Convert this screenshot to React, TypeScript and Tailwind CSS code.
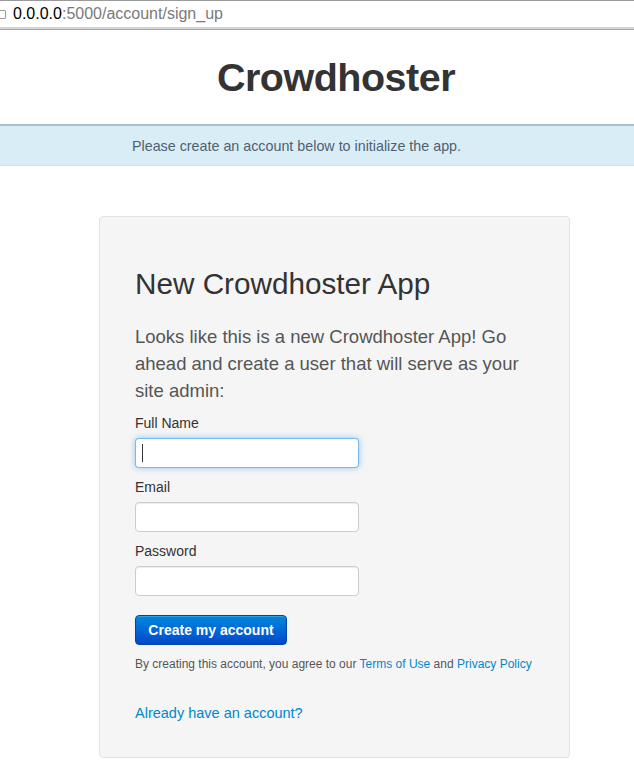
export default function App() {
  return (
    <div className="min-h-screen bg-white font-['Liberation_Sans',Arial,sans-serif] text-[#333]">
      {/* browser address bar */}
      <div className="border-t border-[#9a9a9a]">
        <div className="flex h-[26px] items-center text-[16px] leading-none">
          <span className="ml-[-2px] mr-[7px] inline-block h-[9px] w-[8px] rounded-[1px] border border-[#9a9a9a]" />
          <span className="text-black">0.0.0.0</span>
          <span className="text-[#7a7a7a]">:5000/account/sign_up</span>
        </div>
        <div className="h-[2px] bg-[#d2d2d2]" />
        <div className="h-[1px] bg-[#a9a9a9]" />
      </div>

      {/* header */}
      <header className="flex h-[94px] items-center justify-center pl-[38px] pt-[2px]">
        <h1 className="text-[39.5px] font-bold tracking-[-0.5px] text-[#333]">Crowdhoster</h1>
      </header>

      {/* notice */}
      <div className="border-t-2 border-b border-t-[#a6c0cc] border-b-[#bce8f1] bg-[#d9edf7]">
        <p className="flex h-[39px] items-center pl-[132px] pt-[2px] text-[14.3px] text-[#4e6170]">
          Please create an account below to initialize the app.
        </p>
      </div>

      <main className="pl-[99px] pt-[50px]">
        <div className="w-[471px] rounded-[4px] border border-[#e3e3e3] bg-[#f5f5f5] px-[35px] pt-[49px] pb-[34px]">
          <h2 className="text-[29.7px] leading-[36px] font-light text-[#333]">New Crowdhoster App</h2>
          <p className="mt-[21px] text-[18.5px] leading-[27px] text-[#555]">
            Looks like this is a new Crowdhoster App! Go ahead and create a user that will serve as your site admin:
          </p>

          <form className="mt-[9px]" onSubmit={(e) => e.preventDefault()}>
            <label className="block text-[14px] leading-[20px] text-[#333]">Full Name</label>
            <div className="relative mt-[5px] w-[224px]">
              <input
                type="text"
                className="block h-[30px] w-full rounded-[4px] border border-[rgba(82,168,236,0.8)] bg-white px-[6px] text-[14px] shadow-[0_0_6px_rgba(82,168,236,0.6)] outline-none"
              />
              <span className="absolute left-[7px] top-[6px] h-[18px] w-[1px] bg-[#333]" />
            </div>

            <label className="mt-[9px] block text-[14px] leading-[20px] text-[#333]">Email</label>
            <input
              type="email"
              className="mt-[5px] block h-[30px] w-[224px] rounded-[4px] border border-[#ccc] bg-white px-[6px] text-[14px] shadow-[inset_0_1px_1px_rgba(0,0,0,0.075)] outline-none"
            />

            <label className="mt-[9px] block text-[14px] leading-[20px] text-[#333]">Password</label>
            <input
              type="password"
              className="mt-[5px] block h-[30px] w-[224px] rounded-[4px] border border-[#ccc] bg-white px-[6px] text-[14px] shadow-[inset_0_1px_1px_rgba(0,0,0,0.075)] outline-none"
            />

            <button
              type="submit"
              className="mt-[19px] block h-[30px] w-[152px] rounded-[4px] border border-[#0044aa] bg-gradient-to-b from-[#0088dd] to-[#0046cc] text-[14px] font-bold text-white shadow-[inset_0_1px_0_rgba(255,255,255,0.2)]"
            >
              Create my account
            </button>
          </form>

          <p className="mt-[10px] text-[12px] leading-[18px] text-[#555]">
            By creating this account, you agree to our{' '}
            <a href="#" className="text-[#0088cc]">Terms of Use</a> and{' '}
            <a href="#" className="text-[#0088cc]">Privacy Policy</a>
          </p>

          <a href="#" className="mt-[30px] block text-[14.5px] leading-[20px] text-[#0088cc]">
            Already have an account?
          </a>
        </div>
      </main>
    </div>
  )
}
